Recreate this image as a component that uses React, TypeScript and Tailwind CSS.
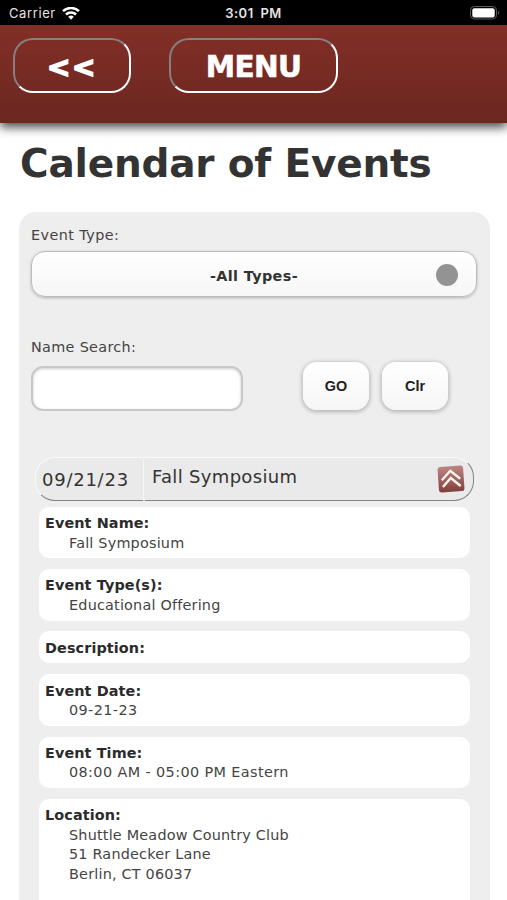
import * as React from "react";

type EventField = {
	label: string;
	lines: string[];
	numeric?: boolean;
	last?: boolean;
};

const FIELDS: EventField[] = [
	{ label: "Event Name:", lines: ["Fall Symposium"] },
	{ label: "Event Type(s):", lines: ["Educational Offering"] },
	{ label: "Description:", lines: [] },
	{ label: "Event Date:", lines: ["09-21-23"], numeric: true },
	{ label: "Event Time:", lines: ["08:00 AM - 05:00 PM Eastern"], numeric: true },
	{
		label: "Location:",
		lines: ["Shuttle Meadow Country Club", "51 Randecker Lane", "Berlin, CT 06037"],
		last: true,
	},
];

function StatusBar() {
	return (
		<div className="grid h-[25px] shrink-0 grid-cols-3 items-center bg-black px-[9px] pt-[2px] font-['Inter',sans-serif] text-[13px] text-[#e4e4e4]">
			<div className="flex items-center gap-[6px]">
				<span className="tracking-[0.6px]">Carrier</span>
				<svg width="18" height="14" viewBox="0 0 18 14" fill="none" stroke="#fff" strokeWidth="2.5">
					<path d="M1 4.2a11.5 11.5 0 0 1 16 0" />
					<path d="M4 7.5a7.2 7.2 0 0 1 10 0" />
					<path d="M6.2 9.8a4 4 0 0 1 5.6 0L9 12.7z" fill="#fff" stroke="none" />
				</svg>
			</div>
			<span className="text-center font-semibold tracking-[0.5px] [word-spacing:3px]">3:01 PM</span>
			<div className="flex justify-end">
				<svg width="30" height="14" viewBox="0 0 30 14" className="-mt-[2px] -mr-[2px]">
					<rect x="0.5" y="0.5" width="26" height="12.5" rx="3.8" fill="none" stroke="#5c5c5c" />
					<rect x="2.3" y="2.2" width="22.4" height="9.2" rx="2" fill="#fff" />
					<path d="M28 4.8c1.6.6 1.6 3.4 0 4z" fill="#5c5c5c" />
				</svg>
			</div>
		</div>
	);
}

function NavButton({ className, children }: { className: string; children: React.ReactNode }) {
	return (
		<button
			type="button"
			className={`flex h-[55px] items-center justify-center rounded-[20px] border-2 border-t-[#868080] border-r-white border-b-white border-l-[#868080] font-bold text-white ${className}`}
		>
			{children}
		</button>
	);
}

function SmallButton({ children }: { children: React.ReactNode }) {
	return (
		<button
			type="button"
			className="h-[48px] w-[66px] rounded-[14px] bg-linear-to-b from-white to-[#f6f6f6] pt-[2px] font-['Liberation_Sans',sans-serif] text-[14.4px] font-bold text-[#222] shadow-[0_1px_4px_1px_rgba(0,0,0,0.25)]"
		>
			{children}
		</button>
	);
}

function CollapseIcon() {
	return (
		<svg width="28" height="28" viewBox="0 0 28 28">
			<defs>
				<linearGradient id="collapse" x1="0" y1="0" x2="0" y2="1">
					<stop offset="0" stopColor="#bd8582" />
					<stop offset="1" stopColor="#823f3d" />
				</linearGradient>
			</defs>
			<rect x="1.2" y="1.2" width="25.6" height="25.6" rx="3" fill="url(#collapse)" transform="rotate(-4 14 14)" />
			<path d="M4.8 15.2 13.3 5.8l9.9 8M5.9 22 13.8 13l9.9 8" fill="none" stroke="#fff5ec" strokeWidth="2.4" />
		</svg>
	);
}

function FieldCard({ label, lines, numeric, last }: EventField) {
	return (
		<div
			className={`rounded-[10px] bg-white px-[6px] pt-[7.4px] text-[14.4px] leading-[19.6px] ${
				last ? "pb-10" : "pb-[5px]"
			}`}
		>
			<div className="font-bold tracking-[0.1px] text-[#2b2b2b]">{label}</div>
			{lines.map((line) => (
				<div
					key={line}
					className={`pl-6 text-[#444] ${numeric ? "tracking-[0.4px]" : "tracking-[0.2px]"}`}
				>
					{line}
				</div>
			))}
		</div>
	);
}

export default function App() {
	return (
		<div className="flex h-[900px] w-[507px] flex-col overflow-hidden bg-white font-['DejaVu_Sans',sans-serif] text-[#333]">
			<StatusBar />
			<header className="flex h-[98px] shrink-0 items-start gap-[37px] bg-linear-to-b from-[#822f27] to-[#6b2720] pt-[13px] pl-[13px] shadow-[0_4px_10px_rgba(0,0,0,0.75)]">
				<NavButton className="w-[118px] pt-[4px] text-[28px] tracking-[1.6px] [-webkit-text-stroke:1.6px_white]">
					&lt;&lt;
				</NavButton>
				<NavButton className="ml-[1px] w-[169px] pt-[4px] text-[29.5px] tracking-[-0.7px] [-webkit-text-stroke:0.6px_white]">
					MENU
				</NavButton>
			</header>

			<h1 className="mt-[17px] ml-[20px] shrink-0 text-[39px] leading-[48px] font-bold tracking-[-0.2px] whitespace-nowrap">
				Calendar of Events
			</h1>

			<main className="mt-[24px] mr-[17px] ml-[19px] h-[800px] shrink-0 rounded-t-[17px] bg-[#eee] px-[12px] pt-[13px]">
				<div className="text-[14.4px] leading-[20px] tracking-[0.42px] text-[#444]">Event Type:</div>
				<button
					type="button"
					className="mt-[6px] flex h-[46px] w-[446px] items-center rounded-[14px] border border-[#bbb] bg-linear-to-b from-white to-[#f6f6f6] pr-[18px] pl-[40px] text-[14.4px] font-bold shadow-[0_1px_3px_rgba(0,0,0,0.25)]"
				>
					<span className="flex-1 pt-[5px] text-center tracking-[0.35px]">-All Types-</span>
					<span className="mt-[2px] size-[22px] rounded-full bg-[#939393]" />
				</button>

				<div className="mt-[40px] text-[14.4px] leading-[20px] tracking-[0.32px] text-[#444]">Name Search:</div>
				<div className="mt-[3px] flex items-start">
					<input
						aria-label="Name Search"
						className="mt-[6px] h-[45px] w-[212px] rounded-[12px] border-2 border-[#c8c8c8] bg-white px-3 shadow-[inset_0_1px_3px_rgba(0,0,0,0.2)] outline-none"
					/>
					<div className="mt-[2px] ml-[60px] flex gap-[13px]">
						<SmallButton>GO</SmallButton>
						<SmallButton>Clr</SmallButton>
					</div>
				</div>

				<section className="mt-[46px] ml-[4px] w-[439px]">
					<div className="flex h-[44px] rounded-[20px] bg-[#eaeaea]">
						<div className="w-[109px] rounded-l-[20px] border border-t-[#fafafa] border-r-[#f5f5f5] border-b-[#858585] border-l-[#fafafa] pt-[10px] pl-[6px] text-[18px] leading-[24px] tracking-[0.75px]">
							09/21/23
						</div>
						<div className="flex flex-1 justify-between rounded-r-[20px] border border-t-[#fafafa] border-r-[#858585] border-b-[#858585] border-l-[#eaeaea] pt-[7px] pr-[8px] pl-[7px] text-[18px] leading-[24px] tracking-[0.32px]">
							<span>Fall Symposium</span>
							<CollapseIcon />
						</div>
					</div>
					<div className="mt-[5.6px] ml-[4px] flex w-[431px] flex-col gap-[10.8px]">
						{FIELDS.map((field) => (
							<FieldCard key={field.label} {...field} />
						))}
					</div>
				</section>
			</main>
		</div>
	);
}
